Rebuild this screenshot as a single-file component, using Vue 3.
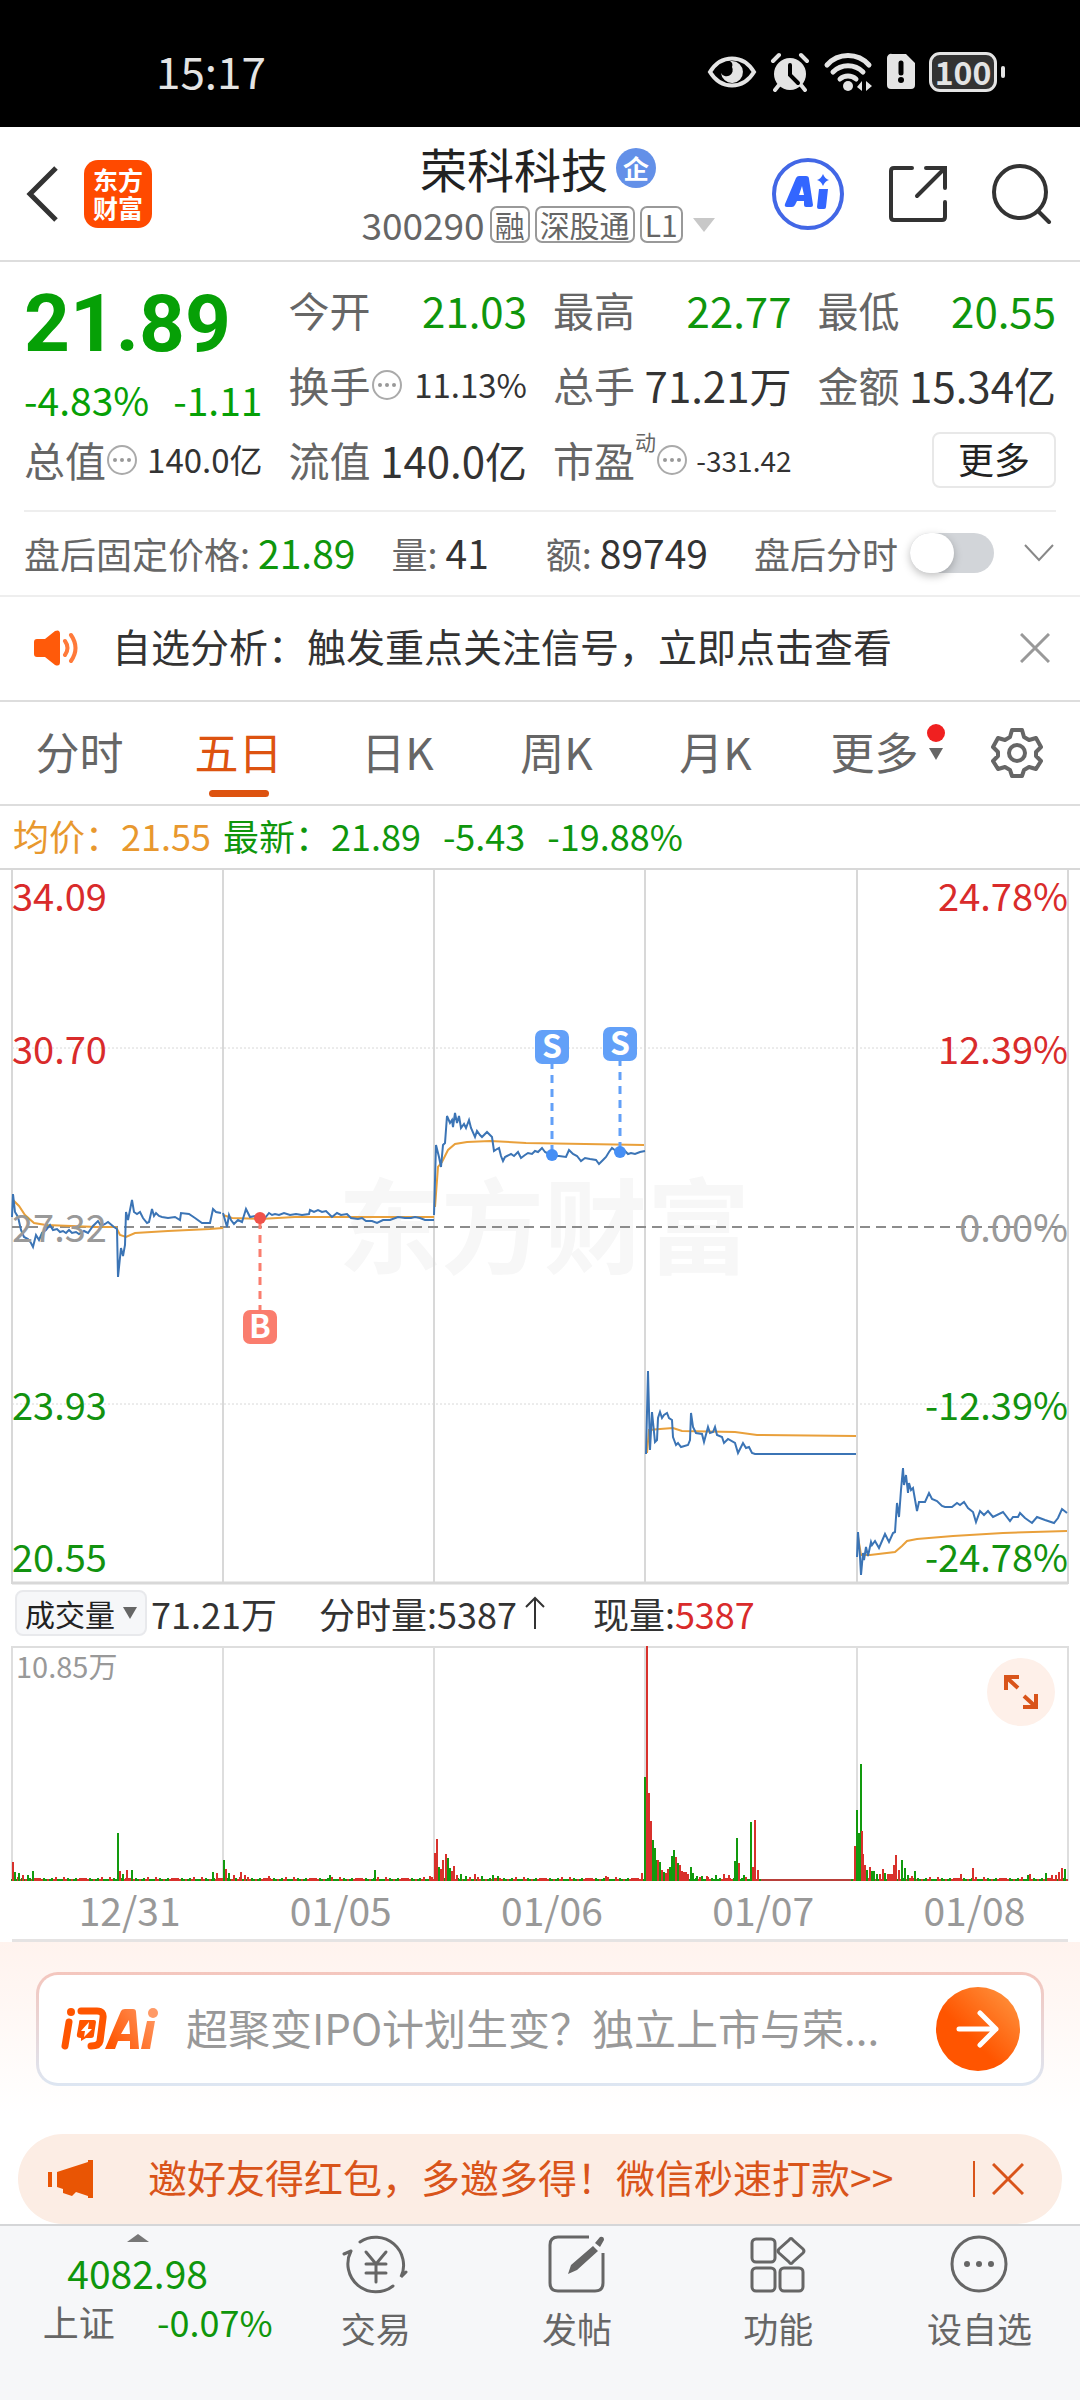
<script setup>
import { ref } from 'vue';

const afterHours = ref(false);
const activeTab = ref('五日');
const showBanner = ref(true);
const showInvite = ref(true);

const tabs = ['分时', '五日', '日K', '周K', '月K', '更多'];

const quotes = [
  { label: '今开', value: '21.03', color: 'green' },
  { label: '最高', value: '22.77', color: 'green' },
  { label: '最低', value: '20.55', color: 'green' },
  { label: '换手', value: '11.13%', tip: true, size: 'mid' },
  { label: '总手', value: '71.21万' },
  { label: '金额', value: '15.34亿' },
  { label: '总值', value: '140.0亿', tip: true, size: 'mid' },
  { label: '流值', value: '140.0亿' },
  { label: '市盈', value: '-331.42', tip: true, sup: '动', size: 'small' },
];

const dates = ['12/31', '01/05', '01/06', '01/07', '01/08'];
const dayLines = [223, 434, 645, 857];

// price labels: left, right, baseline, color
const priceLabels = [
  { price: '34.09', rate: '24.78%', y: 43, color: '#d92b2b' },
  { price: '30.70', rate: '12.39%', y: 196, color: '#d92b2b' },
  { price: '27.32', rate: '0.00%', y: 374, color: '#999999' },
  { price: '23.93', rate: '-12.39%', y: 552, color: '#12920f' },
  { price: '20.55', rate: '-24.78%', y: 704, color: '#12920f' },
];

const marks = [
  { text: 'B', x: 260, dot: 350, top: 442, color: '#fa7d6e', dotColor: '#f0524a' },
  { text: 'S', x: 552, dot: 287, top: 162, color: '#62a0f8', dotColor: '#468ff5' },
  { text: 'S', x: 620, dot: 284, top: 159, color: '#62a0f8', dotColor: '#468ff5' },
];

// one line per trading day
const priceLines = [
  '12,349 13,326 14,335 15,344 18,349 21,362 24,369 28,371 31,375 33,379 36,367 39,372 42,365 46,362 50,357 53,362 57,361 60,364 63,363 66,365 69,362 72,365 76,364 79,366 84,363 88,365 93,358 98,353 101,358 105,356 108,354 114,359 117,361 118,409 121,380 123,388 125,377 126,344 128,352 130,342 132,332 134,344 137,346 140,344 143,350 147,355 149,354 152,341 154,348 156,345 159,348 162,349 168,350 175,349 180,352 181,345 189,346 195,350 202,355 210,355 213,341 216,344 221,345',
  '223,345 227,359 229,347 231,352 234,356 238,352 242,354 246,341 250,349 255,348 260,352 265,350 269,345 272,347 275,346 279,347 284,345 290,347 296,346 302,347 309,346 310,342 314,344 318,342 322,344 326,343 332,349 337,345 341,347 347,346 351,350 358,351 362,350 366,353 372,353 377,355 383,352 390,352 398,349 405,350 411,350 415,349 420,350 425,352 434,352',
  '434,347 436,277 439,289 441,299 443,277 445,275 447,248 450,255 452,252 453,259 455,245 457,255 459,248 461,260 464,256 466,260 469,252 471,260 475,269 477,263 480,267 482,269 487,264 490,267 492,269 494,283 497,281 499,280 501,288 503,293 505,289 507,288 511,286 514,288 518,284 521,290 525,287 528,285 532,286 535,283 538,284 542,280 545,284 547,285 552,288 559,288 566,289 569,282 573,286 577,288 581,293 585,290 590,291 596,292 599,296 603,292 606,289 609,284 612,280 616,283 620,285 625,283 628,286 631,285 635,286 640,284 645,283',
  '646,586 648,503 650,582 652,544 655,574 657,572 658,550 660,544 662,550 664,547 667,545 669,550 672,552 673,569 676,577 678,575 681,579 688,577 690,572 691,545 693,559 696,565 702,566 704,574 708,559 710,565 713,564 715,559 717,567 722,569 724,575 728,571 735,575 738,585 743,575 746,580 749,579 752,585 755,586 856,586',
  '857,689 858,664 860,689 861,707 863,685 864,692 866,679 868,688 871,674 872,677 875,673 879,680 885,666 889,674 893,665 895,664 897,635 899,649 901,622 903,600 904,617 906,607 908,625 909,615 911,622 913,620 917,643 919,634 925,634 929,625 932,631 937,633 942,638 945,639 952,639 957,635 960,637 964,634 968,640 973,644 976,654 980,643 984,647 988,643 993,649 1003,644 1010,653 1013,649 1018,649 1020,645 1025,650 1032,655 1037,649 1045,652 1054,655 1058,650 1062,641 1067,645',
];
const averageLines = [
  '13,332 19,338 25,347 34,355 46,357 97,359 116,359 120,367 126,369 135,365 168,363 210,361 223,360',
  '223,347 232,350 260,351 295,349 434,349',
  '435,339 438,299 442,294 448,282 455,276 467,274 490,273 526,275 644,277',
  '647,585 649,562 660,561 673,560 682,563 735,564 757,567 856,568',
  '858,669 861,687 870,687 895,684 902,678 907,673 917,671 953,668 1003,665 1067,663',
];

// volume peaks: x, height, r = up / g = down
const peaks = [
  [13, 19, 'r'], [15, 9, 'g'], [19, 8, 'g'], [23, 6, 'r'], [28, 6, 'g'], [33, 10, 'g'],
  [118, 48, 'g'], [120, 10, 'r'], [123, 7, 'g'], [127, 11, 'r'], [132, 11, 'g'], [213, 9, 'g'], [217, 8, 'r'],
  [224, 21, 'g'], [226, 12, 'r'], [229, 8, 'g'], [234, 6, 'r'], [241, 9, 'r'], [245, 6, 'r'], [269, 5, 'r'],
  [330, 6, 'g'], [375, 11, 'g'], [430, 5, 'r'],
  [435, 28, 'r'], [437, 42, 'r'], [439, 14, 'g'], [441, 12, 'r'], [443, 21, 'r'], [446, 27, 'r'], [448, 23, 'g'],
  [450, 13, 'g'], [452, 10, 'r'], [454, 15, 'r'], [457, 6, 'r'], [461, 7, 'g'], [466, 5, 'g'], [475, 7, 'r'], [482, 5, 'g'], [493, 6, 'g'], [498, 5, 'g'],
  [606, 5, 'r'], [642, 8, 'r'],
  [645, 104, 'g'], [647, 235, 'r'], [649, 88, 'r'], [651, 60, 'r'], [653, 41, 'g'], [655, 33, 'g'], [656, 21, 'g'],
  [658, 21, 'r'], [660, 19, 'g'], [662, 11, 'r'], [664, 9, 'g'], [666, 8, 'r'], [668, 12, 'r'], [670, 14, 'g'], [672, 25, 'g'],
  [674, 31, 'g'], [676, 24, 'r'], [678, 18, 'g'], [680, 16, 'r'], [682, 10, 'r'], [684, 9, 'r'], [686, 9, 'r'], [688, 7, 'r'],
  [691, 14, 'g'], [693, 8, 'g'], [697, 5, 'g'], [702, 5, 'g'], [707, 5, 'r'], [716, 6, 'g'], [724, 7, 'r'], [729, 6, 'r'],
  [735, 20, 'g'], [737, 43, 'g'], [739, 18, 'r'], [744, 6, 'g'], [751, 59, 'g'], [753, 14, 'r'], [755, 61, 'r'], [758, 11, 'r'],
  [855, 35, 'r'], [857, 71, 'g'], [859, 48, 'g'], [861, 117, 'g'], [862, 50, 'r'], [863, 27, 'r'], [865, 16, 'r'], [867, 11, 'g'], [870, 14, 'r'],
  [872, 10, 'g'], [874, 10, 'g'], [877, 7, 'g'], [880, 7, 'r'], [883, 12, 'r'], [885, 8, 'g'], [888, 7, 'r'], [890, 7, 'r'], [892, 7, 'r'],
  [894, 16, 'r'], [896, 26, 'r'], [899, 11, 'r'], [902, 21, 'g'], [905, 13, 'g'], [908, 6, 'g'], [912, 5, 'r'], [915, 10, 'g'],
  [961, 7, 'r'], [973, 13, 'r'], [1028, 6, 'g'], [1030, 7, 'r'], [1046, 8, 'g'], [1052, 6, 'r'], [1056, 6, 'r'], [1059, 9, 'r'], [1062, 13, 'r'], [1065, 12, 'g'],
];

const buildBars = () => {
  const bars = [];
  for (let x = 12; x < 1067; x += 2) {
    // trading stood still at the price limit
    if (x > 760 && x < 852) continue;
    const n = (x * 37 + x * x * 11) % 23;
    bars.push([x, n > 20 ? 4 : n > 12 ? 3 : 2, n % 2 ? 'r' : 'g']);
  }
  return bars.concat(peaks);
};
const bars = buildBars();
</script>

<template>
  <main class="page">
    <div class="status">
      <span class="clock">15:17</span>
      <div class="status-icons">
        <svg width="50" height="40" viewBox="0 0 50 40">
          <path d="M3 20C14 2 36 2 47 20C36 38 14 38 3 20Z" fill="none" stroke="#e4e4e4" stroke-width="4" />
          <path d="M25 9a11 11 0 1 1-11 12a6 6 0 0 0 11-6a5 5 0 0 0-2-6Z" fill="#e4e4e4" />
        </svg>
        <svg width="40" height="40" viewBox="0 0 40 40">
          <circle cx="20" cy="22" r="16" fill="#e4e4e4" />
          <path d="M3 9l6-6M37 9l-6-6M9 33l-4 5M31 33l4 5" stroke="#e4e4e4" stroke-width="4" stroke-linecap="round" />
          <path d="M20 13v10l8 8" fill="none" stroke="#000" stroke-width="4" stroke-linecap="round" />
        </svg>
        <svg width="50" height="40" viewBox="0 0 50 40">
          <g fill="none" stroke="#e4e4e4" stroke-width="5" stroke-linecap="round">
            <path d="M4 13a28 28 0 0 1 42 0" />
            <path d="M10 20a21 21 0 0 1 30 0" />
            <path d="M17 27a12 12 0 0 1 16 0" />
          </g>
          <circle cx="25" cy="34" r="5" fill="#e4e4e4" />
          <path d="M39 29v10l-5-4ZM43 39v-10l6 5Z" fill="#e4e4e4" />
        </svg>
        <svg width="30" height="40" viewBox="0 0 30 40">
          <path d="M6 2H20L29 11V33a4 4 0 0 1-4 4H5a4 4 0 0 1-4-4V6a4 4 0 0 1 5-4Z" fill="#e4e4e4" />
          <path d="M15 11v10" stroke="#000" stroke-width="5" stroke-linecap="round" />
          <circle cx="15" cy="28" r="3" />
        </svg>
        <div class="battery">100</div>
      </div>
    </div>

    <header>
      <div class="header-left">
        <button class="plain" aria-label="返回">
          <svg width="36" height="60" viewBox="0 0 36 60">
            <path d="M32 4L6 30L32 56" fill="none" stroke="#333" stroke-width="5" />
          </svg>
        </button>
        <div class="logo">东方财富</div>
      </div>
      <div class="title">
        <h1>荣科科技<span class="company">企</span></h1>
        <p>
          300290<span class="tag">融</span><span class="tag">深股通</span><span class="tag">L1</span>
          <svg class="title-arrow" width="22" height="14" viewBox="0 0 22 14"><path d="M0 0h22L11 14Z" fill="#c8c8c8" /></svg>
        </p>
      </div>
      <div class="header-right">
        <button class="plain" aria-label="Ai">
          <svg width="72" height="72" viewBox="0 0 72 72">
            <circle cx="36" cy="36" r="34" fill="none" stroke="#4267e6" stroke-width="4" />
            <path d="M24 20q1-2 3-2h7q3 0 3 3l4 26q0 2-2 2h-5q-2 0-2-2v-4h-7l-2 4q-1 2-3 2h-5q-3 0-2-3ZM30 28l-3 9h5Z" fill="#3366ff" fill-rule="evenodd" />
            <path d="M47 31h9l-2 18q0 2-2 2h-5q-2 0-2-2ZM51 16q2 5 6 6q-4 1-6 6q-2-5-6-6q4-1 6-6Z" fill="#3366ff" />
          </svg>
        </button>
        <button class="plain" aria-label="分享">
          <svg width="60" height="60" viewBox="0 0 60 60">
            <path d="M24 4H6q-3 0-3 3v46q0 3 3 3h48q3 0 3-3V38M38 4h19v20M57 4L29 32" fill="none" stroke="#333" stroke-width="4" stroke-linecap="round" />
          </svg>
        </button>
        <button class="plain" aria-label="搜索">
          <svg width="60" height="60" viewBox="0 0 60 60">
            <circle cx="28" cy="28" r="26" fill="none" stroke="#333" stroke-width="4" />
            <path d="M46 47L57 58" stroke="#333" stroke-width="4" stroke-linecap="round" />
          </svg>
        </button>
      </div>
    </header>

    <section class="quote">
      <div class="price">
        <strong>21.89</strong>
        <p><span>-4.83%</span><span>-1.11</span></p>
      </div>
      <div v-for="q in quotes" :key="q.label" class="cell">
        <span class="label">{{ q.label }}</span>
        <sup v-if="q.sup">{{ q.sup }}</sup>
        <svg v-if="q.tip" class="tip" width="32" height="32" viewBox="0 0 32 32">
          <circle cx="16" cy="16" r="14" fill="none" stroke="#aaa" stroke-width="2" />
          <circle cx="9" cy="16" r="2" fill="#999" /><circle cx="16" cy="16" r="2" fill="#999" /><circle cx="23" cy="16" r="2" fill="#999" />
        </svg>
        <span class="value" :class="[q.color, q.size]">{{ q.value }}</span>
      </div>
      <div class="cell"><button class="more">更多</button></div>
    </section>

    <section class="after">
      <span class="after-price">盘后固定价格: <b class="green">21.89</b></span>
      <span class="after-count">量: <b>41</b></span>
      <span class="after-sum">额: <b>89749</b></span>
      <label class="switch">
        盘后分时
        <input v-model="afterHours" type="checkbox" />
      </label>
      <button class="plain" aria-label="展开">
        <svg width="30" height="18" viewBox="0 0 30 18"><path d="M1 1L15 16L29 1" fill="none" stroke="#888" stroke-width="2" /></svg>
      </button>
    </section>

    <section v-if="showBanner" class="banner">
      <svg width="46" height="36" viewBox="0 0 46 36">
        <path d="M3 9h8L21 1q5-2 5 3v28q0 5-5 3L11 27H3q-3 0-3-3V12q0-3 3-3Z" fill="#ff5a0a" />
        <path d="M31 11q5 7 0 14M37 5q9 13 0 26" fill="none" stroke="#ff7a3a" stroke-width="4" stroke-linecap="round" />
      </svg>
      <a href="#">自选分析：触发重点关注信号，立即点击查看</a>
      <button class="plain" aria-label="关闭" @click="showBanner = false">
        <svg width="30" height="30" viewBox="0 0 30 30"><path d="M1 1L29 29M29 1L1 29" stroke="#999" stroke-width="3" /></svg>
      </button>
    </section>

    <nav class="tabs">
      <button
        v-for="tab in tabs"
        :key="tab"
        :class="{ active: tab === activeTab }"
        @click="activeTab = tab"
      >
        {{ tab }}
        <span v-if="tab === '更多'" class="tab-extra">
          <i class="dot"></i>
          <svg width="14" height="12" viewBox="0 0 14 12"><path d="M0 0h14L7 12Z" fill="#666" /></svg>
        </span>
      </button>
      <button class="settings" aria-label="设置">
        <svg width="52" height="52" viewBox="0 0 52 52" fill="none" stroke="#666" stroke-width="4" stroke-linejoin="round">
          <path d="M21 3h10l2 7l5 3l7-2l5 9l-5 5v4l5 5l-5 8l-7-2l-5 3l-2 6H21l-2-6l-5-3l-7 2l-5-8l5-5v-4l-5-5l5-9l7 2l5-3Z" />
          <circle cx="26" cy="26" r="8" />
        </svg>
      </button>
    </nav>

    <p class="info">
      <span class="orange">均价：21.55</span>
      <span class="info-now"><span>最新：21.89</span><span>-5.43</span><span>-19.88%</span></span>
    </p>

    <svg class="chart" viewBox="0 0 1080 717">
      <text x="544" y="398" text-anchor="middle" font-size="103" font-weight="700" fill="#f7f7f7">东方财富</text>
      <g stroke="#d8d8d8" stroke-width="2">
        <path d="M0 1H1080M12 0V716M1068 0V716" fill="none" />
        <path v-for="x in dayLines" :key="x" :d="`M${x} 0V716`" />
        <path d="M12 180H1068M12 536H1068" stroke-width="1" stroke-dasharray="2 2" />
        <path d="M12 715H1068" stroke-width="3" />
      </g>
      <path d="M12 359H1068" stroke="#8c8c8c" stroke-width="2" stroke-dasharray="10 6" />
      <g fill="none" stroke="#e9a03b" stroke-width="2">
        <polyline v-for="line in averageLines" :key="line" :points="line" />
      </g>
      <g fill="none" stroke="#3b74b5" stroke-width="2">
        <polyline v-for="line in priceLines" :key="line" :points="line" />
      </g>
      <g v-for="label in priceLabels" :key="label.price" :fill="label.color" font-size="38">
        <text x="12" :y="label.y">{{ label.price }}</text>
        <text x="1068" :y="label.y" text-anchor="end">{{ label.rate }}</text>
      </g>
      <g v-for="mark in marks" :key="mark.x">
        <path :d="`M${mark.x} ${mark.top + 17}V${mark.dot}`" :stroke="mark.color" stroke-width="3" stroke-dasharray="8 6" />
        <circle :cx="mark.x" :cy="mark.dot" r="6" :fill="mark.dotColor" />
        <rect :x="mark.x - 17" :y="mark.top" width="34" height="34" rx="7" :fill="mark.color" />
        <text :x="mark.x" :y="mark.top + 28" text-anchor="middle" font-size="32" font-weight="700" fill="#fff">{{ mark.text }}</text>
      </g>
    </svg>

    <div class="volume-bar">
      <button class="volume-type">
        成交量
        <svg width="14" height="12" viewBox="0 0 14 12"><path d="M0 0h14L7 12Z" fill="#666" /></svg>
      </button>
      <span class="volume-total">71.21万</span>
      <span class="volume-minute">分时量:5387<svg width="20" height="34" viewBox="0 0 20 34"><path d="M10 33V2M1 11L10 2L19 11" fill="none" stroke="#333" stroke-width="2" /></svg></span>
      <span>现量:<span class="red">5387</span></span>
    </div>

    <div class="volume">
      <svg class="chart" viewBox="0 0 1080 236">
        <g stroke="#dedede" stroke-width="2">
          <path d="M12 1H1068M12 0V235M1068 0V235" fill="none" />
          <path v-for="x in dayLines" :key="x" :d="`M${x} 0V235`" />
        </g>
        <path d="M12 234H1068" stroke="#b8403a" stroke-width="2" />
        <rect
          v-for="(bar, i) in bars"
          :key="i"
          :x="bar[0] - 1"
          :y="235 - bar[1]"
          width="2"
          :height="bar[1]"
          :fill="bar[2] === 'r' ? '#d8312c' : '#129a0e'"
        />
        <text x="16" y="32" font-size="29" fill="#999">10.85万</text>
      </svg>
      <button class="expand" aria-label="全屏">
        <svg width="36" height="36" viewBox="0 0 36 36" fill="none" stroke="#d9541a" stroke-width="4">
          <path d="M3 16V3H16M3 3L15 14M33 20V33H20M33 33L21 22" />
        </svg>
      </button>
    </div>

    <div class="dates">
      <span v-for="date in dates" :key="date">{{ date }}</span>
    </div>

    <section class="ask">
      <div class="ask-box">
        <svg width="100" height="48" viewBox="0 0 100 48">
          <defs>
            <linearGradient id="askFill" gradientUnits="userSpaceOnUse" x1="50" y1="40" x2="98" y2="8">
              <stop offset="0" stop-color="#ff5500" />
              <stop offset="1" stop-color="#ff9a66" />
            </linearGradient>
          </defs>
          <path d="M9 17L5 41M21 6H37Q44 6 43 13L40 36Q39 41 31 41" fill="none" stroke="#ff5500" stroke-width="7" stroke-linecap="round" stroke-linejoin="round" />
          <circle cx="11" cy="7" r="4" fill="#ff5500" />
          <path d="M20 15h14q2 0 2 2l-2 13q0 3-3 3h-5l-5 3v-3q-5 0-4-4l2-11q0-3 1-3Z" fill="#ff5500" />
          <path d="M29 17l-8 9h4l-1 6l8-8h-4Z" fill="#fff" />
          <path d="M45 44L61 6q1-2 4-2h8q3 0 3 3l3 37h-9v-8H58l-3 8ZM61 29h9l-1-14Z" fill="url(#askFill)" fill-rule="evenodd" />
          <path d="M87 16h8l-5 28h-9Z" fill="url(#askFill)" />
          <circle cx="93" cy="8" r="5" fill="#ff9a66" />
        </svg>
        <a href="#">超聚变IPO计划生变？独立上市与荣...</a>
        <button class="go" aria-label="提问">
          <svg width="44" height="40" viewBox="0 0 44 40">
            <path d="M3 20H40M24 4L40 20L24 36" fill="none" stroke="#fff" stroke-width="5" stroke-linecap="round" stroke-linejoin="round" />
          </svg>
        </button>
      </div>
    </section>

    <section v-if="showInvite" class="invite">
      <svg width="46" height="40" viewBox="0 0 46 40" fill="#e95504">
        <path d="M0 13h4v15H0ZM9 13L40 3V1h5v38h-5v-2L28 33l-4 4l-9-3v-4l-6-2Z" />
      </svg>
      <a href="#">邀好友得红包，多邀多得！微信秒速打款&gt;&gt;</a>
      <button class="plain" aria-label="关闭" @click="showInvite = false">
        <svg width="32" height="32" viewBox="0 0 32 32"><path d="M1 1L31 31M31 1L1 31" stroke="#d9541a" stroke-width="3" /></svg>
      </button>
    </section>

    <footer>
      <a href="#" class="index">
        <svg width="22" height="8" viewBox="0 0 22 8"><path d="M0 8L11 0L22 8Z" fill="#777" /></svg>
        <span class="index-value">4082.98</span>
        <span class="index-row"><span>上证</span><span class="green">-0.07%</span></span>
      </a>
      <button>
        <svg width="68" height="60" viewBox="0 0 68 60" fill="none" stroke="#666" stroke-width="3" stroke-linecap="round">
          <path d="M18 8A28 28 0 0 1 59 43L64 38M9 17A28 28 0 0 0 51 52M2 20L9 17" />
          <path d="M24 18L34 30L44 18M24 30H44M24 39H44M34 30V48" />
        </svg>
        交易
      </button>
      <button>
        <svg width="60" height="60" viewBox="0 0 60 60">
          <path d="M42 3H11Q3 3 3 11V49Q3 57 11 57H48Q56 57 56 49V19" fill="none" stroke="#666" stroke-width="3" />
          <path d="M46 12l5 5L30 36l-9 4l3-9ZM48 9l5-6q4-1 4 3l-4 7Z" fill="#666" />
        </svg>
        发帖
      </button>
      <button>
        <svg width="60" height="60" viewBox="0 0 60 60" fill="none" stroke="#666" stroke-width="3">
          <rect x="4" y="5" width="23" height="23" rx="4" />
          <rect x="4" y="34" width="23" height="23" rx="4" />
          <rect x="32" y="34" width="23" height="23" rx="4" />
          <path d="M41 6q2-3 4 0l10 9q2 2 0 4l-10 9q-2 3-4 0l-10-9q-2-2 0-4Z" />
        </svg>
        功能
      </button>
      <button>
        <svg width="60" height="60" viewBox="0 0 60 60">
          <circle cx="30" cy="30" r="27" fill="none" stroke="#666" stroke-width="3" />
          <circle cx="18" cy="30" r="3" fill="#666" /><circle cx="30" cy="30" r="3" fill="#666" /><circle cx="42" cy="30" r="3" fill="#666" />
        </svg>
        设自选
      </button>
    </footer>
  </main>
</template>

<style>
body {
  margin: 0;
  background: #fff;
}
</style>

<style scoped>
.page {
  min-height: 100vh;
  display: flex;
  flex-direction: column;
  background: #fff;
  color: #333;
  font-family: 'Noto Sans CJK SC', sans-serif;
  font-size: 36px;
  line-height: 1;
  white-space: nowrap;
}

h1,
p {
  margin: 0;
  font-weight: 400;
}

svg {
  display: block;
  flex: none;
}

a {
  color: inherit;
  text-decoration: none;
}

button {
  padding: 0;
  border: none;
  background: none;
  color: inherit;
  font-family: inherit;
  font-size: 36px;
  line-height: 1;
  cursor: pointer;
}

b {
  font-weight: 400;
  font-size: 39px;
  color: #333;
}

.green,
b.green {
  color: #0f960c;
}

.red {
  color: #d92b2b;
}

.orange {
  color: #e8982e;
}

.status {
  height: 127px;
  box-sizing: border-box;
  padding: 17px 83px 0 156px;
  display: flex;
  justify-content: space-between;
  align-items: center;
  background: #000;
  color: #e4e4e4;
}

.clock {
  padding-bottom: 4px;
  font-size: 44px;
}

.status-icons {
  display: flex;
  align-items: center;
  gap: 13px;
}

.battery {
  position: relative;
  width: 62px;
  height: 34px;
  border: 3px solid #e4e4e4;
  border-radius: 11px;
  background: #333;
  font-size: 32px;
  font-weight: 700;
  line-height: 32px;
  text-align: center;
}

.battery::after {
  content: '';
  position: absolute;
  top: 11px;
  right: -11px;
  width: 4px;
  height: 12px;
  border-radius: 2px;
  background: #e4e4e4;
}

header {
  height: 135px;
  box-sizing: border-box;
  padding: 0 28px 0 24px;
  display: grid;
  grid-template-columns: 1fr auto 1fr;
  align-items: center;
  border-bottom: 2px solid #ddd;
}

.header-left {
  display: flex;
  align-items: center;
  gap: 24px;
}

.logo {
  box-sizing: border-box;
  width: 68px;
  height: 68px;
  padding: 5px 8px;
  border-radius: 14px;
  background: #ff4a00;
  color: #fff;
  font-size: 25px;
  font-weight: 700;
  line-height: 28px;
  text-align: center;
  white-space: normal;
}

.title {
  display: flex;
  flex-direction: column;
  align-items: center;
  gap: 15px;
}

.title h1 {
  display: flex;
  align-items: center;
  gap: 8px;
  font-size: 47px;
  color: #222;
}

.company {
  width: 40px;
  height: 40px;
  border-radius: 50%;
  background: #6390e8;
  color: #fff;
  font-size: 26px;
  font-weight: 700;
  line-height: 39px;
  text-align: center;
}

.title p {
  display: flex;
  align-items: center;
  gap: 5px;
  font-size: 37px;
  color: #666;
}

.tag {
  padding: 0 3px;
  border: 2px solid #999;
  border-radius: 7px;
  font-size: 30px;
  line-height: 33px;
}

.title-arrow {
  margin-left: 5px;
}

.header-right {
  display: flex;
  align-items: center;
  justify-content: flex-end;
  gap: 44px;
}

.quote {
  padding: 10px 0 13px;
  margin: 0 24px;
  display: grid;
  grid-template-columns: repeat(4, 1fr);
  grid-auto-rows: 75px;
  column-gap: 26px;
  border-bottom: 2px solid #eee;
}

.price {
  grid-row: span 2;
  color: #06a006;
}

.price strong {
  display: block;
  font-family: Roboto, sans-serif;
  font-size: 80px;
  font-weight: 700;
  line-height: 104px;
}

.price p {
  display: flex;
  justify-content: space-between;
  font-size: 39px;
  line-height: 46px;
}

.cell {
  display: flex;
  align-items: center;
}

.label {
  font-size: 41px;
  color: #666;
}

.cell sup {
  align-self: flex-start;
  padding-top: 8px;
  font-size: 21px;
  line-height: 22px;
  color: #666;
}

.value {
  margin-left: auto;
  font-size: 42px;
}

.value.mid {
  font-size: 33px;
}

.value.small {
  font-size: 28px;
}

.more {
  width: 124px;
  height: 56px;
  margin-left: auto;
  padding-bottom: 4px;
  border: 2px solid #e8e8e8;
  border-radius: 8px;
  color: #222;
}

.after {
  height: 81px;
  padding: 0 26px 2px 24px;
  display: flex;
  align-items: center;
  gap: 30px;
  color: #666;
  border-bottom: 2px solid #eee;
}

.after-price {
  margin-right: 6px;
}

.after-count {
  flex: 1;
}

.after-sum {
  margin-right: 16px;
}

.switch {
  display: flex;
  align-items: center;
  gap: 12px;
}

.switch input {
  appearance: none;
  width: 84px;
  height: 40px;
  margin: 0;
  border-radius: 20px;
  background: #d2d5d9;
}

.switch input::before {
  content: '';
  display: block;
  width: 44px;
  height: 40px;
  border-radius: 22px;
  background: #fff;
  box-shadow: 0 3px 8px rgba(0, 0, 0, 0.25);
}

.switch input:checked::before {
  margin-left: auto;
}

.banner {
  height: 101px;
  padding: 0 30px 2px 34px;
  display: flex;
  align-items: center;
  gap: 32px;
  border-bottom: 2px solid #ddd;
  font-size: 39px;
}

.banner a {
  flex: 1;
  padding-bottom: 4px;
}

.tabs {
  height: 102px;
  display: flex;
  border-bottom: 2px solid #ddd;
}

.tabs button {
  position: relative;
  flex: 159;
  padding-bottom: 5px;
  font-size: 44px;
  color: #666;
}

.tabs .settings {
  flex: 126;
  padding-bottom: 0;
  display: flex;
  align-items: center;
  justify-content: center;
}

.tabs .active {
  color: #dd5310;
}

.tabs .active::after {
  content: '';
  position: absolute;
  bottom: 7px;
  left: 50%;
  width: 60px;
  height: 7px;
  margin-left: -30px;
  border-radius: 4px;
  background: #dd5310;
}

.tab-extra {
  position: absolute;
  top: 22px;
  right: 9px;
  display: flex;
  flex-direction: column;
  align-items: center;
  gap: 6px;
}

.dot {
  width: 18px;
  height: 18px;
  border-radius: 50%;
  background: #f02020;
}

.info {
  height: 57px;
  padding: 0 13px 5px;
  display: flex;
  align-items: center;
  gap: 12px;
}

.info-now {
  display: flex;
  gap: 22px;
  color: #0f960c;
}

.chart {
  width: 100%;
  overflow: visible;
}

.volume-bar {
  height: 56px;
  padding: 0 15px 5px;
  display: flex;
  align-items: center;
  gap: 4px;
}

.volume-type {
  height: 46px;
  padding: 0 8px;
  display: flex;
  align-items: center;
  gap: 8px;
  border: 2px solid #e8e9ec;
  border-radius: 8px;
  background: #f6f7f9;
  font-size: 30px;
  color: #222;
}

.volume-total {
  margin-right: 38px;
}

.volume-minute {
  margin-right: 44px;
  display: flex;
  align-items: center;
  gap: 8px;
}

.volume {
  position: relative;
}

.expand {
  position: absolute;
  top: 12px;
  right: 25px;
  width: 68px;
  height: 68px;
  display: flex;
  align-items: center;
  justify-content: center;
  border-radius: 50%;
  background: #fef0e9;
}

.dates {
  height: 55px;
  margin: 0 12px;
  padding-bottom: 2px;
  display: grid;
  grid-template-columns: repeat(5, 1fr);
  align-items: center;
  border-bottom: 3px solid #e5e3e3;
  color: #999;
  font-size: 39px;
  text-align: center;
}

.dates span {
  padding-left: 24px;
}

.ask {
  padding: 30px 36px 48px;
  background: linear-gradient(#fff3ee, #fff 90%);
}

.ask-box {
  height: 108px;
  padding: 0 21px;
  display: flex;
  align-items: center;
  gap: 26px;
  border: 3px solid transparent;
  border-radius: 22px;
  background:
    linear-gradient(#fff, #fff) padding-box,
    linear-gradient(#f4c6bd, #dde6f2) border-box;
}

.ask-box a {
  flex: 1;
  padding-bottom: 5px;
  color: #999;
  font-size: 42px;
}

.go {
  width: 84px;
  height: 84px;
  display: flex;
  align-items: center;
  justify-content: center;
  border-radius: 50%;
  background: linear-gradient(225deg, #ff9a45, #ff5500 60%);
}

.invite {
  height: 90px;
  margin: 0 18px;
  padding: 0 38px 0 30px;
  display: flex;
  align-items: center;
  gap: 54px;
  border-radius: 45px;
  background: #fcede4;
  color: #d9541a;
  font-size: 39px;
}

.invite a {
  flex: 1;
  padding-bottom: 6px;
}

.invite button {
  padding: 2px 0 2px 17px;
  border-left: 2px solid #d9541a;
}

footer {
  flex: 1;
  min-height: 174px;
  display: flex;
  align-items: flex-start;
  border-top: 2px solid #d5d6d8;
  background: #f6f7f9;
  color: #666;
  font-size: 36px;
}

footer button {
  flex: 201;
  padding-top: 8px;
  display: flex;
  flex-direction: column;
  align-items: center;
  gap: 16px;
  font-size: 35px;
}

.index {
  flex: 275;
  padding-top: 8px;
  display: flex;
  flex-direction: column;
  align-items: center;
  gap: 11px;
}

.index-value {
  color: #0f960c;
  font-size: 39px;
}

.index-row {
  width: 230px;
  margin-left: 40px;
  display: flex;
  justify-content: space-between;
}
</style>
